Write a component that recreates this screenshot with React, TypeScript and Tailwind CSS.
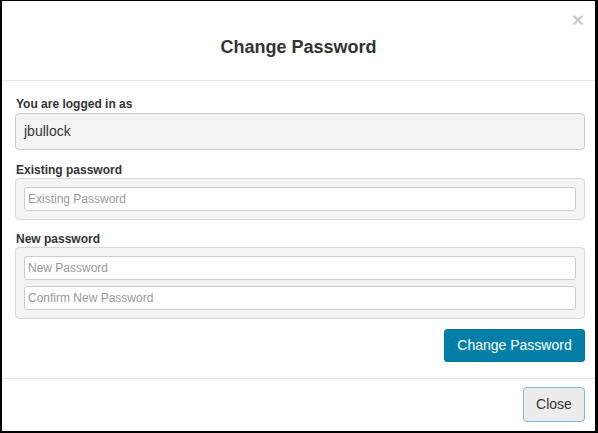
export default function App() {
  const font = "font-['Liberation_Sans',Arial,sans-serif]";
  const inputClass =
    "block h-[24px] w-full rounded-[3px] border border-[#cccccc] bg-white px-[3px] text-[12px] text-[#333] placeholder:text-[#999999] outline-none";
  const labelClass = "block text-[12px] font-bold leading-[15px] text-[#333333] pl-[1px]";

  return (
    <div className={`${font} h-[433px] w-[598px] bg-white`}>
      <div className="flex h-full w-full flex-col border-b-2 border-l-2 border-r-[3px] border-t border-black">
        {/* header */}
        <div className="relative h-[80px] border-b border-[#e5e5e5] pt-[34px] text-center">
          <h4 className="text-[18px] font-bold leading-[24px] text-[#333333]">Change Password</h4>
          <button
            type="button"
            className="absolute right-[11px] top-[8px] text-[21px] font-bold leading-[21px] text-black opacity-20"
          >
            ×
          </button>
        </div>

        {/* body */}
        <div className="flex flex-col pl-[13px] pr-[10px] pt-[16px]">
          <label className={labelClass}>You are logged in as</label>
          <div className="mt-[1px] flex h-[37px] items-center rounded-[4px] border border-[#cccccc] bg-[#f3f3f3] px-[8px] text-[14px] text-[#333333]">
            jbullock
          </div>

          <label className={`${labelClass} mt-[13px]`}>Existing password</label>
          <div className="rounded-[4px] border border-[#d6d6d6] bg-[#f4f4f4] p-[8px]">
            <input type="password" placeholder="Existing Password" className={inputClass} />
          </div>

          <label className={`${labelClass} mt-[12px]`}>New password</label>
          <div className="flex flex-col gap-[6px] rounded-[4px] border border-[#d6d6d6] bg-[#f4f4f4] p-[8px]">
            <input type="password" placeholder="New Password" className={inputClass} />
            <input type="password" placeholder="Confirm New Password" className={inputClass} />
          </div>

          <div className="mt-[10px] flex justify-end">
            <button
              type="button"
              className="h-[33px] w-[141px] rounded-[3px] border border-[#0276a0] bg-[#0480a8] text-[14px] text-white"
            >
              Change Password
            </button>
          </div>
        </div>

        {/* footer */}
        <div className="mt-[16px] flex flex-1 items-start justify-end border-t border-[#e5e5e5] pl-[13px] pr-[10px] pt-[8px]">
          <button
            type="button"
            className="h-[35px] w-[62px] rounded-[4px] border border-[#7fb7e6] bg-[#ececec] text-[14px] text-[#333333]"
          >
            Close
          </button>
        </div>
      </div>
    </div>
  );
}
